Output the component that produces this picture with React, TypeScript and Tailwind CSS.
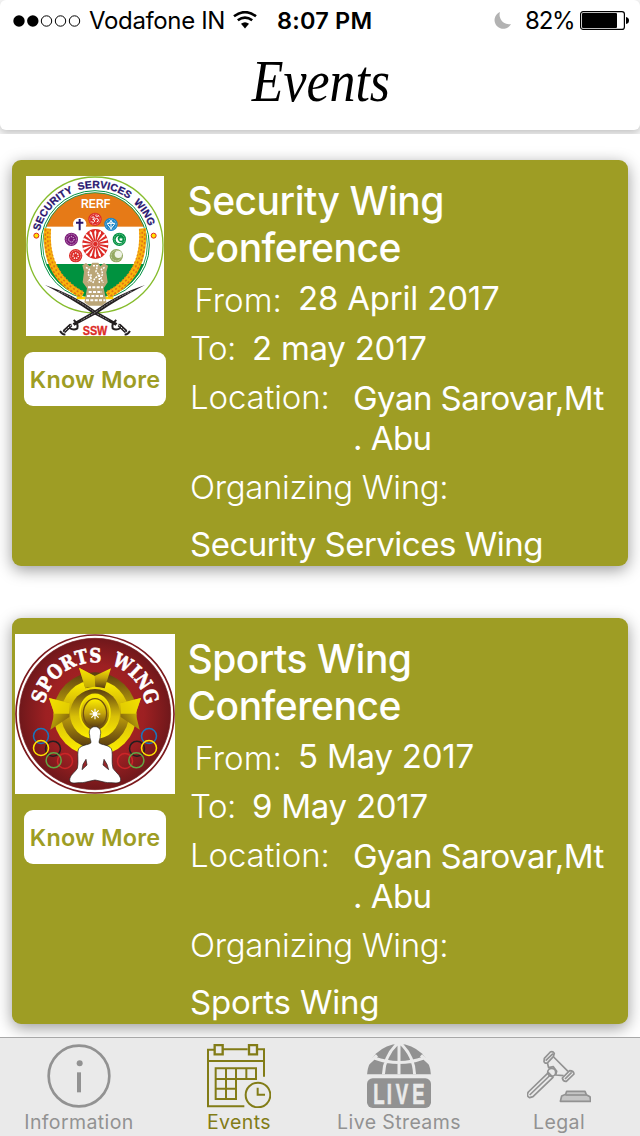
import type { ReactNode } from "react";

type EventItem = {
  title: string;
  from: string;
  to: string;
  wing: string;
  wingClass: string;
  logo: ReactNode;
};

function SecurityLogo() {
  const faiths = [
    { x: 255, y: 163, c: "#dd2a26" },
    { x: 303, y: 178, c: "#1683c6" },
    { x: 328, y: 223, c: "#009040" },
    { x: 319, y: 272, c: "#93a860" },
    { x: 197, y: 272, c: "#dd2a26" },
    { x: 184, y: 223, c: "#7b1a78" },
  ];
  const spokes = Array.from({ length: 16 }, (_, i) => i * 22.5);
  return (
    <svg viewBox="48 33 414 480" className="h-[160px] w-[138px] overflow-visible bg-white" preserveAspectRatio="none">
      <defs>
        <path id="security-arc" d="M 84 240 A 171 171 0 0 1 426 240" />
        <clipPath id="flag-clip">
          <circle cx="255" cy="240" r="157" />
        </clipPath>
      </defs>
      <circle cx="255" cy="240" r="204" fill="#fff" stroke="#86bc2c" strokeWidth="4" />
      <g clipPath="url(#flag-clip)">
        <rect x="90" y="80" width="330" height="105" fill="#e67a17" />
        <rect x="90" y="297" width="330" height="120" fill="#00923f" />
      </g>
      <circle cx="255" cy="240" r="163" fill="none" stroke="#00923f" strokeWidth="3" />
      <circle cx="255" cy="240" r="157" fill="none" stroke="#00923f" strokeWidth="2.5" />
      <path d="M200 399 H310" stroke="#ffd500" strokeWidth="7" />
      {[false, true].map((flip) => (
        <g key={String(flip)} transform={flip ? "translate(510 0) scale(-1 1)" : undefined}>
          <path d="M113 190 C105 275 135 350 218 391" fill="none" stroke="#f9b50b" strokeWidth="21" />
          <path d="M107 192 C99 280 129 352 214 396" fill="none" stroke="#e07414" strokeWidth="5" strokeDasharray="7 6" />
          <path d="M114 192 C107 275 137 346 219 388" fill="none" stroke="#e07414" strokeWidth="5" strokeDasharray="6 7" strokeDashoffset="5" />
          <path d="M121 192 C114 270 143 340 222 381" fill="none" stroke="#e88a1a" strokeWidth="4" strokeDasharray="5 6" />
          <circle cx="79" cy="212" r="7.5" fill="#ffe500" stroke="#dd2a26" strokeWidth="3" />
        </g>
      ))}
      <text fill="#29166f" fontFamily="Liberation Sans" fontWeight="700" fontSize="31" stroke="#29166f" strokeWidth=".8" wordSpacing="8">
        <textPath href="#security-arc" startOffset="42" textLength="438" lengthAdjust="spacing">
          SECURITY SERVICES WING
        </textPath>
      </text>
      <text x="257" y="128" textAnchor="middle" fill="#fff" fontFamily="Liberation Sans" fontWeight="700" fontSize="37" textLength="88" lengthAdjust="spacingAndGlyphs">
        RERF
      </text>
      <circle cx="209" cy="178" r="20" fill="#fff" />
      <path d="M209 162 V196 M198 173 H220" stroke="#29166f" strokeWidth="6" />
      {faiths.map((f) => (
        <g key={`${f.x}-${f.y}`} transform={`translate(${f.x} ${f.y})`}>
          <circle r="20" fill={f.c} />
          <circle r="15.5" fill="none" stroke="#fff" strokeWidth="1.5" strokeDasharray="3 2" />
        </g>
      ))}
      <path d="M245 157 Q253 153 253 159 Q253 163 248 163 Q255 164 254 169 Q251 175 244 170 M254 164 Q260 157 264 162 Q268 170 260 171 M256 152 Q261 156 267 152" fill="none" stroke="#fff" strokeWidth="3" />
      <path d="M303 167 L313 178 L303 191 L293 178 Z M303 165 V193 M291 175 H315" fill="none" stroke="#fff" strokeWidth="3" />
      <path d="M329 212 A11.5 11.5 0 1 0 338 230 A10 10 0 1 1 329 212 Z" fill="#fff" />
      <path d="M333 217 l2 4 5 0 -4 3 1 5 -4 -3 -4 3 1 -5 -4 -3 5 0z" fill="#fff" />
      <circle cx="325" cy="268" r="11" fill="#eef2e4" />
      <circle cx="184" cy="223" r="8" fill="none" stroke="#fff" strokeWidth="3" strokeDasharray="3 3" />
      <circle cx="197" cy="272" r="8" fill="none" stroke="#fff" strokeWidth="4" strokeDasharray="4 3" />
      <ellipse cx="256" cy="237" rx="39" ry="45" fill="#dd2a26" />
      {spokes.map((a) => (
        <path key={a} transform={`translate(256 237) rotate(${a})`} d="M0 -9 L3.4 -36 L0 -43 L-3.4 -36 Z" fill="#fff" />
      ))}
      <circle cx="256" cy="237" r="8" fill="#dd2a26" stroke="#fff" strokeWidth="1.5" />
      <path d="M226 398 L231 370 L218 352 L222 320 L217 301 L228 294 L240 304 L247 293 L265 293 L271 304 L282 294 L294 302 L289 322 L293 352 L281 370 L287 398 L289 412 L275 422 H237 L223 412 Z" fill="#bba678" />
      <path d="M228 307 l10 6 -4 14 8 12 -8 12 M249 302 h13 l-4 18 10 10 -14 10 -6 16 M284 307 l-10 6 4 14 -6 14 8 12 M243 328 v22 M268 330 v26" fill="none" stroke="#fff" strokeWidth="4.5" strokeDasharray="6 3" />
      <path d="M234 367 h45 M236 381 h40 M231 393 h50 M228 406 h58" fill="none" stroke="#fff" strokeWidth="6" strokeDasharray="9 4" />
      {[false, true].map((flip) => (
        <g key={String(flip)} transform={flip ? "translate(510 0) scale(-1 1)" : undefined}>
          <path d="M105 360 Q190 388 256 437 L322 475 L317 482 L250 446 Q185 402 105 360 Z" fill="#231f20" />
          <path d="M145 379 Q200 402 252 441 L296 466" fill="none" stroke="#fff" strokeWidth="1.5" strokeDasharray="6 3" />
          <path d="M319 465 Q304 476 308 490 Q318 497 332 489 M300 468 L312 473 M325 478 L350 501 M344 508 Q352 510 360 498" fill="none" stroke="#231f20" strokeWidth="6" />
          <path d="M327 480 L348 500" stroke="#231f20" strokeWidth="11" />
          <path d="M325 479 L349 501" stroke="#fff" strokeWidth="3" strokeDasharray="6 4" />
        </g>
      ))}
      <text x="255" y="509" textAnchor="middle" fill="#dd2a26" stroke="#dd2a26" strokeWidth="1" fontFamily="Liberation Sans" fontWeight="700" fontSize="36" textLength="74" lengthAdjust="spacingAndGlyphs">
        SSW
      </text>
    </svg>
  );
}

function SportsLogo() {
  const rings = [
    { x: 93, y: 333, c: "#1878be" },
    { x: 129, y: 371, c: "#231f20" },
    { x: 93, y: 369, c: "#ffe500" },
    { x: 165, y: 408, c: "#cc2528" },
    { x: 131, y: 406, c: "#62a744" },
  ];
  return (
    <svg viewBox="15 27 480 480" className="h-[160px] w-[160px] bg-white">
      <defs>
        <path id="sports-arc" d="M 100 267 A 155 155 0 0 1 410 267" />
        <radialGradient id="maroon">
          <stop offset="0" stopColor="#b02425" />
          <stop offset=".65" stopColor="#9d2022" />
          <stop offset="1" stopColor="#70181b" />
        </radialGradient>
        <linearGradient id="gold-down" x1="0" y1="0" x2="0" y2="1">
          <stop offset="0" stopColor="#5a3c10" />
          <stop offset=".55" stopColor="#d9c008" />
          <stop offset="1" stopColor="#fff000" />
        </linearGradient>
        <linearGradient id="gold-up" x1="0" y1="0" x2="0" y2="1">
          <stop offset="0" stopColor="#fff000" />
          <stop offset=".5" stopColor="#c3a30b" />
          <stop offset="1" stopColor="#55380f" />
        </linearGradient>
        <linearGradient id="gold-side" x1="0" y1="0" x2="1" y2="1">
          <stop offset="0" stopColor="#f9e900" />
          <stop offset="1" stopColor="#694710" />
        </linearGradient>
      </defs>
      <circle cx="255" cy="267" r="237" fill="#fff" stroke="#7c1a1d" strokeWidth="5" />
      <circle cx="255" cy="267" r="227" fill="url(#maroon)" stroke="#7c1a1d" strokeWidth="2" />
      <text fill="#fff" stroke="#fff" strokeWidth="2" fontFamily="DejaVu Serif" fontWeight="700" fontSize="58" wordSpacing="14">
        <textPath href="#sports-arc" startOffset="30" textLength="430" lengthAdjust="spacingAndGlyphs">
          SPORTS WING
        </textPath>
      </text>
      <circle cx="255" cy="267" r="125" fill="url(#gold-down)" />
      <circle cx="255" cy="267" r="102" fill="url(#gold-up)" />
      <circle cx="255" cy="267" r="75" fill="url(#gold-down)" />
      <path d="M207 128 L254 153 L303 130 L284 190 Q254 180 226 190 Z" fill="url(#gold-up)" />
      <path d="M207 128 L254 153 L256 188 Q238 183 226 190 Z" fill="#f3df00" opacity=".65" />
      {[false, true].map((flip) => (
        <g key={String(flip)} transform={flip ? "translate(510 0) scale(-1 1)" : undefined}>
          <path d="M117 219 L180 235 L178 276 L121 314 L133 266 Z" fill="url(#gold-side)" />
          <path d="M117 219 L180 235 L178 266 H133 Z" fill="#f3df00" opacity=".8" />
        </g>
      ))}
      <ellipse cx="255" cy="263" rx="45" ry="55" fill="url(#gold-up)" stroke="#f5e500" strokeWidth="5" />
      <ellipse cx="255" cy="265" rx="35" ry="44" fill="url(#gold-up)" stroke="#715010" strokeWidth="4" />
      <path d="M255 251 V283 M239 267 H271 M244 256 L266 278 M266 256 L244 278" stroke="#fff" strokeWidth="3.5" />
      <circle cx="255" cy="267" r="6" fill="#fff" />
      {[false, true].map((flip) => (
        <g key={String(flip)} transform={flip ? "translate(510 0) scale(-1 1)" : undefined}>
          {rings.map((r) => (
            <circle key={r.c} cx={r.x} cy={r.y} r="22.5" fill="none" stroke={r.c} strokeWidth="4.5" />
          ))}
        </g>
      ))}
      <path d="M255 305 C268 305 275 317 271 330 C271 342 267 345 267 353 C272 361 304 358 306 378 C308 391 304 413 309 430 C318 444 333 451 332 466 C331 475 320 474 307 473 C286 475 271 467 255 465 C239 467 224 475 203 473 C190 475 180 475 179 466 C179 451 193 444 202 430 C206 413 202 391 204 378 C206 358 238 361 243 353 C243 345 239 342 239 330 C235 317 242 305 255 305 Z" fill="#fff" stroke="#231f20" strokeWidth="2" />
      <path d="M228 403 L231 420 L216 434 L219 418 Z M282 403 L279 420 L296 434 L291 418 Z" fill="#98272a" stroke="#231f20" strokeWidth="2" />
    </svg>
  );
}

const events: EventItem[] = [
  {
    title: "Security Wing",
    from: "28 April 2017",
    to: "2 may 2017",
    wing: "Security Services Wing",
    wingClass: "mt-[17px] pl-[12px] tracking-[-0.5px]",
    logo: <SecurityLogo />,
  },
  {
    title: "Sports Wing",
    from: "5 May 2017",
    to: "9 May 2017",
    wing: "Sports Wing",
    wingClass: "mt-[17px] pl-[12px] tracking-[-0.2px]",
    logo: <SportsLogo />,
  },
];

function EventCard({ event }: { event: EventItem }) {
  return (
    <article className="flex h-[406px] w-[616px] shrink-0 rounded-[9px] bg-[#9e9d24] text-white shadow-[0_4px_16px_rgba(0,0,0,0.4)]">
      <div className="flex w-[166px] shrink-0 flex-col items-center pt-4">
        {event.logo}
        <button className="mt-4 h-[54px] w-[142px] rounded-[9px] bg-white pt-[2px] text-[23.4px] leading-[52px] font-semibold tracking-[0.2px] whitespace-nowrap text-[#9e9d24]">
          Know More
        </button>
      </div>
      <div className="pt-[17px] text-[33px] leading-[40px] whitespace-nowrap">
        <h2 className="pl-[9.5px] text-[39px] leading-[47px] font-medium tracking-[-0.5px]">
          {event.title}
          <br />
          Conference
        </h2>
        <div className="mt-[7px] flex h-[40px]">
          <span className="w-[120px] pt-[2px] pl-[16.5px] font-light">From:</span>
          <span className="tracking-[-0.2px]">{event.from}</span>
        </div>
        <div className="mt-[10px] flex h-[40px]">
          <span className="w-[74px] pl-[12px] font-light tracking-[-0.5px]">To:</span>
          <span className="tracking-[-0.25px]">{event.to}</span>
        </div>
        <div className="mt-[9px] flex h-[81px]">
          <span className="w-[175px] pl-[12px] font-light tracking-[-0.15px]">Location:</span>
          <span className="pt-[1px] tracking-[-0.55px]">
            Gyan Sarovar,Mt
            <br />. Abu
          </span>
        </div>
        <div className="mt-[9px] pl-[12px] font-light tracking-[-0.35px]">Organizing Wing:</div>
        <div className={event.wingClass}>{event.wing}</div>
      </div>
    </article>
  );
}

function InfoIcon() {
  return (
    <svg viewBox="140 41 192 192" className="size-16" fill="none" stroke="currentColor">
      <circle cx="236" cy="137" r="91" strokeWidth="8" />
      <circle cx="238" cy="99" r="9" fill="currentColor" stroke="none" />
      <path d="M236 126 V186" strokeWidth="12" />
    </svg>
  );
}

function CalendarIcon() {
  return (
    <svg viewBox="621 41 192 192" className="size-16" fill="none" stroke="currentColor" strokeWidth="6">
      <path d="M642 58 H624 V228 H733 M669 57 H743 M773 57 H792 V139 M624 92 H792" />
      <path d="M644 44 H668 V72 H644 Z M747 44 H771 V72 H747 Z" strokeWidth="7" />
      <path d="M647 114 H768 V146 H647 Z M647 146 V206 H708 V114 M647 175 H708 M678 114 V206 M739 114 V146" />
      <circle cx="774" cy="194" r="37" />
      <path d="M773 172 V193 H795" />
    </svg>
  );
}

function LiveIcon() {
  return (
    <svg viewBox="141 41 192 192" className="size-16 overflow-visible">
      <clipPath id="globe-half">
        <rect x="141" y="41" width="192" height="91" />
      </clipPath>
      <g clipPath="url(#globe-half)">
        <circle cx="237" cy="137" r="96" fill="currentColor" />
        <path d="M237 38 V140 M234 38 C205 65 190 95 190 140 M240 38 C270 65 284 95 284 140 M163 83 Q237 110 311 83 M171 75 L143 101 M303 75 L331 101" fill="none" stroke="#eaeaea" strokeWidth="9" />
      </g>
      <rect x="141" y="144" width="192" height="89" rx="17" fill="currentColor" />
      <text transform="scale(.62 1)" x="258 323 366 446" y="221" fontFamily="Liberation Sans" fontWeight="700" fontSize="90" fill="#eaeaea" stroke="#eaeaea" strokeWidth="2">
        LIVE
      </text>
    </svg>
  );
}

function GavelIcon() {
  return (
    <svg viewBox="624 41 192 192" className="size-16" fill="none" stroke="currentColor" strokeWidth="5" strokeLinejoin="round">
      <path d="M688 127 L628 185 Q621 197 632 202 L642 199 L702 141 Z M632 194 L694 134" />
      <path d="M676 84 L694 65 Q701 61 706 69 L703 79 L686 97 Q678 101 675 94 Z M680 91 L702 70" />
      <path d="M704 80 L747 123 M685 97 L689 112 L703 109 L713 123 L710 134 L734 136" />
      <path d="M730 143 L752 121 Q764 121 765 131 L742 153 Q732 154 730 143 Z M738 146 L758 126" />
      <circle cx="698" cy="126" r="12" />
      <path d="M724 213 L728 197 L740 192 L743 183 H798 L802 193 L813 199 L815 213 Z" fill="#c5c5c5" />
      <path d="M739 194 H803" />
    </svg>
  );
}

const tabs = [
  { label: "Information", icon: <InfoIcon />, active: false },
  { label: "Events", icon: <CalendarIcon />, active: true },
  { label: "Live Streams", icon: <LiveIcon />, active: false },
  { label: "Legal", icon: <GavelIcon />, active: false },
];

function StatusBar() {
  return (
    <div className="flex h-[41px] items-center text-[24px] leading-[41px] whitespace-nowrap text-black">
      <div className="flex w-[258px] shrink-0 items-center pl-[13px]">
        <svg viewBox="0 0 68 12" className="h-3 w-[68px]">
          <circle cx="6" cy="6" r="5.7" />
          <circle cx="19.8" cy="6" r="5.7" />
          <g fill="none" stroke="#000">
            <circle cx="33.5" cy="6" r="5.2" />
            <circle cx="47.5" cy="6" r="5.2" />
            <circle cx="61.5" cy="6" r="5.2" />
          </g>
        </svg>
        <span className="ml-[8px] w-[144px] tracking-[-0.35px]">Vodafone IN</span>
        <svg viewBox="0 0 24 18" className="mb-[2px] h-[18px] w-6 shrink-0" fill="none" stroke="#000" strokeWidth="2.6">
          <path d="M1 5.3 Q12 -3 23 5.3" />
          <path d="M4.8 9.3 Q12 3.8 19.2 9.3" />
          <path d="M8 12.8 Q12 9.6 16 12.8 L12 17.4 Z" fill="#000" stroke="none" />
        </svg>
      </div>
      <span className="ml-[19px] w-[216px] text-[23.5px] font-semibold tracking-[0.2px]">8:07 PM</span>
      <svg viewBox="0 0 18 18" className="size-[18px] shrink-0">
        <path d="M7 0 A8.7 8.7 0 1 0 18 12 A9.4 9.4 0 0 1 7 0 Z" fill="#b2b2b2" />
      </svg>
      <span className="ml-[14px] w-[55px] tracking-[-1.2px]">82%</span>
      <svg viewBox="0 0 49 19" className="h-[19px] w-[49px] shrink-0">
        <rect x=".6" y=".6" width="43.8" height="17.8" rx="2.5" fill="none" stroke="#000" strokeWidth="1.2" />
        <rect x="2" y="2" width="35" height="15" rx="1" />
        <path d="M46 6 Q49 6.5 49 9.5 Q49 12.5 46 13 Z" />
      </svg>
    </div>
  );
}

export default function App() {
  return (
    <div className="flex h-[1136px] w-[640px] flex-col overflow-hidden bg-white font-['Inter',sans-serif]">
      <div className="h-[134px] shrink-0 overflow-hidden bg-[#f7f7f7]">
        <header className="h-[130px] rounded-[6px] bg-white shadow-[0_3px_8px_rgba(0,0,0,0.22)]">
          <StatusBar />
          <h1 className="h-[80px] origin-center scale-x-[0.88] pl-[2px] text-center font-['Liberation_Serif',serif] text-[59px] leading-[81px] text-black italic">
            Events
          </h1>
        </header>
      </div>
      <main className="flex h-[903px] shrink-0 flex-col gap-[52px] overflow-hidden px-3 pt-[26px]">
        {events.map((event) => (
          <EventCard key={event.title} event={event} />
        ))}
      </main>
      <nav className="grid h-[99px] shrink-0 grid-cols-4 border-t border-[#a8a8a8] bg-[#eaeaea]">
        {tabs.map((tab) => (
          <div
            key={tab.label}
            className={
              tab.active
                ? "flex flex-col items-center pt-[6px] pr-[2px] text-[#827c17]"
                : "flex flex-col items-center pt-[6px] pr-[2px] text-[#929292]"
            }
          >
            {tab.icon}
            <span className="text-[19.5px] leading-[28px] tracking-[0.4px] whitespace-nowrap">{tab.label}</span>
          </div>
        ))}
      </nav>
    </div>
  );
}
